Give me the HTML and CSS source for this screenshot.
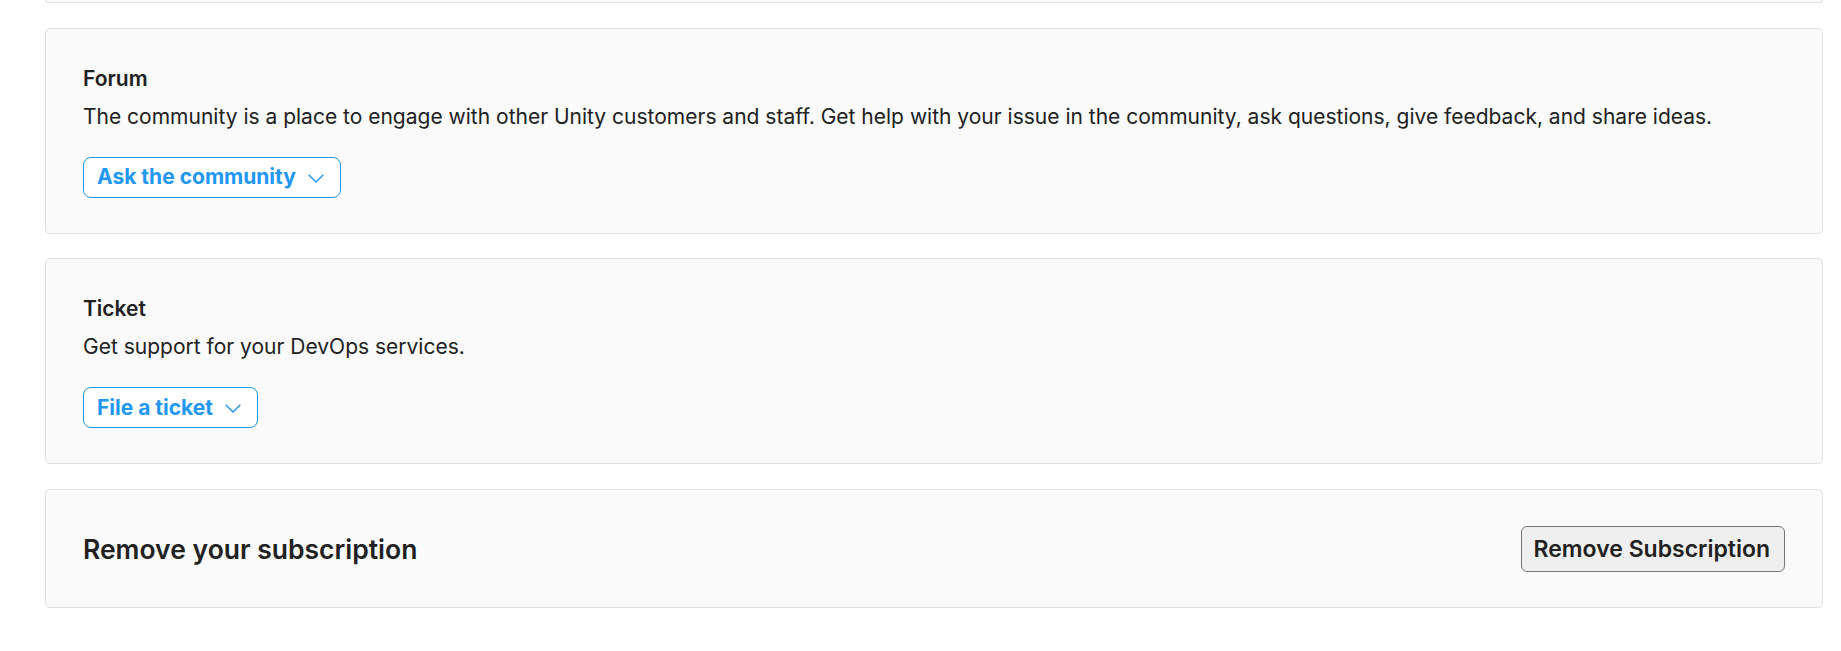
FILE: index.html
```html
<!DOCTYPE html>
<html lang="en">
<head>
<meta charset="utf-8">
<title>Support</title>
<link rel="stylesheet" href="styles.css">
</head>
<body>
<main class="page">
  <section class="card card-stub"></section>

  <section class="card">
    <h3 class="card-title">Forum</h3>
    <p class="card-text">The community is a place to engage with other Unity customers and staff. Get help with your issue in the community, ask questions, give feedback, and share ideas.</p>
    <div class="actions">
      <button class="btn-outline" type="button">
        <span>Ask the community</span>
        <svg class="chev" viewBox="0 0 16 9" width="16" height="9" aria-hidden="true"><path d="M0.7 0.7 L8 8 L15.3 0.7" fill="none" stroke="currentColor" stroke-width="1.4"/></svg>
      </button>
    </div>
  </section>

  <section class="card">
    <h3 class="card-title">Ticket</h3>
    <p class="card-text">Get support for your DevOps services.</p>
    <div class="actions">
      <button class="btn-outline" type="button">
        <span>File a ticket</span>
        <svg class="chev" viewBox="0 0 16 9" width="16" height="9" aria-hidden="true"><path d="M0.7 0.7 L8 8 L15.3 0.7" fill="none" stroke="currentColor" stroke-width="1.4"/></svg>
      </button>
    </div>
  </section>

  <section class="card card-row">
    <h2 class="row-title">Remove your subscription</h2>
    <button class="btn-gray" type="button">Remove Subscription</button>
  </section>
</main>
</body>
</html>
```

FILE: styles.css
```css
* {
  box-sizing: border-box;
}

html, body {
  margin: 0;
  padding: 0;
  background: #ffffff;
}

body {
  font-family: Inter, "Noto Sans", "Liberation Sans", sans-serif;
  color: #212121;
  font-size: 21px;
  line-height: 30px;
}

.page {
  display: flex;
  flex-direction: column;
  gap: 24.5px;
  padding: 0 18px 0 45px;
}

.card {
  background: #fafafa;
  border: 1px solid #e2e2e2;
  border-radius: 5px;
  padding: 35px 37px 35px;
}

.card-stub {
  height: 3px;
  padding: 0;
  border-top: none;
  border-radius: 0 0 5px 5px;
}

.card-title {
  margin: 0 0 8px;
  font-size: 21px;
  line-height: 30px;
  font-weight: 600;
  color: #212121;
}

.card-text {
  margin: 0;
  font-size: 21px;
  line-height: 30px;
  font-weight: 400;
  color: #212121;
}

.actions {
  margin-top: 25px;
  display: flex;
}

.btn-outline {
  display: inline-flex;
  align-items: center;
  gap: 12px;
  height: 41px;
  padding: 0 16px 0 13px;
  border: 1px solid #2196f3;
  border-radius: 8px;
  background: #ffffff;
  color: #2196f3;
  font-family: inherit;
  font-size: 21px;
  font-weight: 700;
  line-height: 24px;
  cursor: pointer;
}

.chev {
  display: block;
  margin-top: 2px;
}

.card-row {
  display: flex;
  align-items: center;
  justify-content: space-between;
  padding-top: 36px;
  padding-bottom: 35px;
}

.row-title {
  margin: 0;
  font-size: 26.5px;
  line-height: 32px;
  font-weight: 600;
  color: #212121;
}

.btn-gray {
  height: 46px;
  padding: 0 14px 0 12px;
  border: 1px solid #767676;
  border-radius: 6px;
  background: #efefef;
  color: #212121;
  font-family: inherit;
  font-size: 23px;
  font-weight: 600;
  line-height: 28px;
  cursor: pointer;
}
```
